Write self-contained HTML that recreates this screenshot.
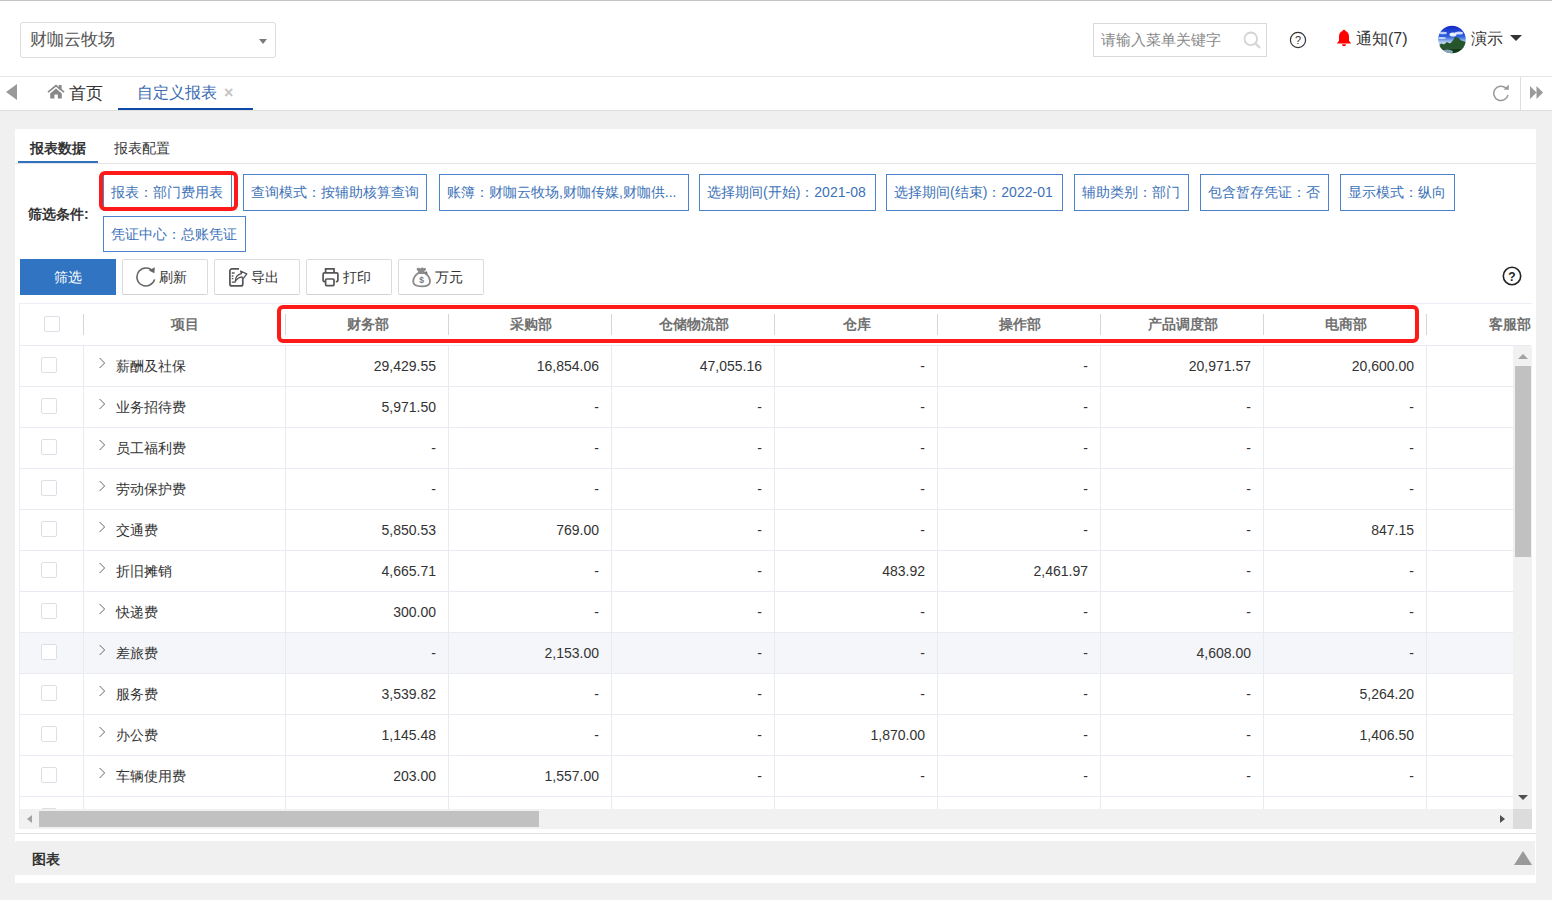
<!DOCTYPE html>
<html><head><meta charset="utf-8">
<style>
*{box-sizing:border-box;margin:0;padding:0}
html,body{width:1552px;height:900px;overflow:hidden;background:#f0f0f0;font-family:"Liberation Sans",sans-serif;color:#333;position:relative}
.abs{position:absolute}
.tag{position:absolute;height:36px;border:1px solid #4a82cc;color:#3c72b8;font-size:14px;line-height:34px;padding:0 7px;white-space:nowrap;background:#fff}
.btn{position:absolute;top:259px;height:36px;width:86px;border:1px solid #dcdcdc;border-bottom-color:#d2d2d2;background:#fff;font-size:14px;line-height:34px;color:#333;border-radius:2px}
.redbox{position:absolute;border:4px solid #ff1a1a;border-radius:6px}
#tbl{left:19px;top:303px;width:1513px;height:526px;border:1px solid #eceef5;border-bottom:0;border-right:0;background:#fff;overflow:hidden}
.row{position:absolute;left:0;width:1511px;height:41px;border-bottom:1px solid #e9ebf3}
.cell{position:absolute;top:0;height:40px;line-height:40px;font-size:14px;color:#333;white-space:nowrap}
.num{text-align:right;padding-right:12px;width:163px}
.vl{position:absolute;top:0;width:1px;height:40px;background:#e9ebf3}
.cb{position:absolute;width:16px;height:16px;border:1px solid #dcdfe6;border-radius:2px;background:#fff}
.hd{position:absolute;top:0;height:41px;line-height:41px;font-size:14px;font-weight:bold;color:#707070;text-align:center;width:163px;white-space:nowrap}
.hvl{position:absolute;top:10px;width:1px;height:21px;background:#d6d6d6}
</style></head><body>
<div class="abs" style="left:0;top:0;width:1552px;height:77px;background:#fff;border-bottom:1px solid #e6e6e6"></div>
<div class="abs" style="left:0;top:0;width:1552px;height:1px;background:#c4c4c4"></div>
<div class="abs" style="left:20px;top:22px;width:256px;height:36px;border:1px solid #dcdcdc;border-radius:3px;background:#fff"></div>
<span class="abs" style="left:30px;top:28px;font-size:16.5px;line-height:22px;color:#555">财咖云牧场</span>
<div class="abs" style="left:259px;top:39px;width:0;height:0;border-left:4.5px solid transparent;border-right:4.5px solid transparent;border-top:5.5px solid #7a7a7a"></div>
<div class="abs" style="left:1093px;top:23px;width:174px;height:34px;border:1px solid #d9d9d9;background:#fff"></div>
<span class="abs" style="left:1101px;top:29px;font-size:14.8px;line-height:22px;color:#888">请输入菜单关键字</span>
<svg class="abs" style="left:1243px;top:31px" width="19" height="19" viewBox="0 0 19 19"><circle cx="7.8" cy="7.8" r="6.3" fill="none" stroke="#d4d4d4" stroke-width="1.8"/><line x1="12.3" y1="12.3" x2="17" y2="17" stroke="#d4d4d4" stroke-width="2"/></svg>
<svg class="abs" style="left:1289px;top:31px" width="18" height="18" viewBox="0 0 18 18"><circle cx="9" cy="9" r="7.6" fill="none" stroke="#333" stroke-width="1.2"/><text x="9" y="13.2" font-size="11" text-anchor="middle" fill="#333" font-family="Liberation Sans">?</text></svg>
<svg class="abs" style="left:1336px;top:29px" width="16" height="18" viewBox="0 0 16 18"><path d="M8 .8c.9 0 1.4.6 1.4 1.3C12 2.9 13 5 13 8v3.8l2.2 2.6H.8L3 11.8V8c0-3 1-5.1 3.6-5.9C6.6 1.4 7.1.8 8 .8z" fill="#f00"/><path d="M6 15.2a2 2 0 0 0 4 0z" fill="#f00"/></svg>
<span class="abs" style="left:1356px;top:28px;font-size:16px;line-height:22px;color:#333">通知(7)</span>
<svg class="abs" style="left:1438px;top:25px" width="28" height="29" viewBox="0 0 28 29"><defs><clipPath id="av"><circle cx="14" cy="14.5" r="13.8"/></clipPath><linearGradient id="sky" x1="0" y1="0" x2="0" y2="1"><stop offset="0" stop-color="#1226c4"/><stop offset="0.4" stop-color="#2f62dc"/><stop offset="0.6" stop-color="#b8d0ee"/></linearGradient></defs><g clip-path="url(#av)"><rect width="28" height="29" fill="url(#sky)"/><ellipse cx="5" cy="8" rx="4" ry="1.3" fill="#e8f0ff" opacity=".8"/><ellipse cx="15" cy="9.5" rx="3.5" ry="2" fill="#fff" opacity=".9"/><ellipse cx="21" cy="8" rx="4" ry="1.5" fill="#f0f6ff" opacity=".85"/><ellipse cx="4" cy="13" rx="4" ry="1" fill="#fff" opacity=".7"/><path d="M0 22L3 18.5 6 19.5 9 17 12 18.5 15 15.5 17 12 20 12.5 23 15.5 28 17V24H0z" fill="#25552a"/><rect y="22" width="28" height="8" fill="#123c18"/><rect y="22.5" width="28" height="1" fill="#6a8a6a" opacity=".6"/><ellipse cx="9" cy="27" rx="6" ry="2.5" fill="#9ab8d8" opacity=".85"/></g></svg>
<span class="abs" style="left:1471px;top:28px;font-size:16px;line-height:22px;color:#333">演示</span>
<div class="abs" style="left:1510px;top:35px;width:0;height:0;border-left:6px solid transparent;border-right:6px solid transparent;border-top:6.5px solid #333"></div>
<div class="abs" style="left:0;top:77px;width:1552px;height:34px;background:#fff;border-bottom:1px solid #dedede"></div>
<div class="abs" style="left:6px;top:84px;width:0;height:0;border-top:8.5px solid transparent;border-bottom:8.5px solid transparent;border-right:11px solid #999"></div>
<svg class="abs" style="left:47px;top:84px" width="18" height="16" viewBox="0 0 18 16"><polyline points="1,8.2 9,1.6 17,8.2" fill="none" stroke="#888" stroke-width="1.7"/><rect x="11.8" y="1" width="2.8" height="4.5" fill="#888"/><path d="M3.2 9.4L9 4.6l5.8 4.8v5.2h-4V10.6H7.4v4H3.2z" fill="#888"/></svg>
<span class="abs" style="left:69px;top:82px;font-size:16.5px;line-height:22px;color:#333">首页</span>
<span class="abs" style="left:137px;top:82px;font-size:16px;line-height:22px;color:#3a6ab0">自定义报表</span>
<span class="abs" style="left:224px;top:82px;font-size:16px;font-weight:bold;line-height:22px;color:#c4c4c4">×</span>
<div class="abs" style="left:118px;top:108px;width:135px;height:2px;background:#0f4aa8"></div>
<svg class="abs" style="left:1492px;top:84px" width="18" height="18" viewBox="0 0 18 18"><path d="M16 10.8A7.2 7.2 0 1 1 14 4.2" fill="none" stroke="#999" stroke-width="1.5"/><path d="M11.6 5.8h5.2V.6z" fill="#999"/></svg>
<div class="abs" style="left:1520px;top:77px;width:1px;height:33px;background:#ddd"></div>
<svg class="abs" style="left:1530px;top:86px" width="14" height="13" viewBox="0 0 14 13"><path d="M0 0l6.5 6.5L0 13zM6.5 0l6.5 6.5-6.5 6.5z" fill="#999"/></svg>
<div class="abs" style="left:15px;top:129px;width:1521px;height:754px;background:#fff"></div>
<span class="abs" style="left:30px;top:138px;font-size:14px;font-weight:bold;line-height:20px;color:#333">报表数据</span>
<span class="abs" style="left:114px;top:138px;font-size:14px;line-height:20px;color:#333">报表配置</span>
<div class="abs" style="left:15px;top:163px;width:1521px;height:1px;background:#e4e4e4"></div>
<div class="abs" style="left:18px;top:161px;width:80px;height:2px;background:#3072c0"></div>
<span class="abs" style="left:28px;top:204px;font-size:14px;font-weight:bold;line-height:20px;color:#333">筛选条件:</span>
<div class="tag" style="left:103px;top:174px;width:129px;height:37px;line-height:35px">报表：部门费用表</div>
<div class="tag" style="left:243px;top:174px;width:184px;height:37px;line-height:35px">查询模式：按辅助核算查询</div>
<div class="tag" style="left:439px;top:174px;width:250px;height:37px;line-height:35px">账簿：财咖云牧场,财咖传媒,财咖供...</div>
<div class="tag" style="left:699px;top:174px;width:177px;height:37px;line-height:35px">选择期间(开始)：2021-08</div>
<div class="tag" style="left:886px;top:174px;width:177px;height:37px;line-height:35px">选择期间(结束)：2022-01</div>
<div class="tag" style="left:1074px;top:174px;width:115px;height:37px;line-height:35px">辅助类别：部门</div>
<div class="tag" style="left:1200px;top:174px;width:129px;height:37px;line-height:35px">包含暂存凭证：否</div>
<div class="tag" style="left:1340px;top:174px;width:115px;height:37px;line-height:35px">显示模式：纵向</div>
<div class="tag" style="left:103px;top:216px;width:143px">凭证中心：总账凭证</div>
<div class="redbox" style="left:99px;top:171px;width:139px;height:40px"></div>
<div class="abs" style="left:20px;top:259px;width:96px;height:36px;background:#3174c1;color:#fff;font-size:14px;line-height:36px;text-align:center">筛选</div>
<div class="btn" style="left:122px"><svg class="abs" style="left:13px;top:6px" width="22" height="22" viewBox="0 0 22 22"><path d="M18.6 13.4A9 9 0 1 1 17.2 5.6" fill="none" stroke="#666" stroke-width="1.6"/><path d="M12.8 4.6l5.6 2.6.4-6z" fill="#666"/></svg><span class="abs" style="left:36px;top:0">刷新</span></div>
<div class="btn" style="left:214px"><svg class="abs" style="left:14px;top:8px" width="20" height="20" viewBox="0 0 20 20"><path d="M10 .9H3C1.8 .9.9 1.8.9 3v12.9c0 1.2.9 2 2 2h8.9c1.2 0 2-.9 2-2v-4.6" fill="none" stroke="#555" stroke-width="1.7"/><path d="M2.8 5H5.6M2.8 8H4.4M2.8 10.7H4.4M2.8 14.2H6.3" stroke="#555" stroke-width="1.3"/><path d="M6.2 13.8C6.3 9 9 6.3 12.5 5.6L11.6 3.2 17.8 5.8l-4 5.4-.8-2.4C10 9.2 7.8 10.6 6.2 13.8z" fill="none" stroke="#555" stroke-width="1.3" stroke-linejoin="round"/></svg><span class="abs" style="left:36px;top:0">导出</span></div>
<div class="btn" style="left:306px"><svg class="abs" style="left:14px;top:7px" width="19" height="20" viewBox="0 0 19 20"><path d="M4.6 5.8V1.8h8.4v4" fill="none" stroke="#555" stroke-width="1.7"/><path d="M4.4 14.6H3.3C2.6 14.6 2.1 14 2.1 13.3V7.2c0-.7.6-1.3 1.3-1.3h12.2c.7 0 1.3.6 1.3 1.3v6.1c0 .7-.5 1.3-1.2 1.3h-.9" fill="none" stroke="#555" stroke-width="1.7"/><rect x="4.6" y="12" width="8.4" height="6.6" rx="1" fill="none" stroke="#555" stroke-width="1.7"/></svg><span class="abs" style="left:36px;top:0">打印</span></div>
<div class="btn" style="left:398px"><svg class="abs" style="left:13px;top:6px" width="20" height="22" viewBox="0 0 20 22"><path d="M4.5 3.2C5.5 1.5 7 1.6 8.3 2.4 9.4 1 11 1.2 11.9 2.3 13 1.8 14 2.3 14 3.4L12.2 6H6.5z" fill="#8a8a8a"/><path d="M12.2 6.3l2.6-1 .9 2.6-2.4.6z" fill="#666"/><path d="M6.4 7C3 9.2 1.2 12.4 1.2 15.6c0 3.2 3 4.8 8.6 4.8s8.2-1.6 8.2-4.8c0-3.2-1.8-6.4-5.2-8.6z" fill="none" stroke="#8a8a8a" stroke-width="1.8"/><text x="9.6" y="17" font-size="8.5" font-weight="bold" text-anchor="middle" fill="#777" font-family="Liberation Sans">$</text></svg><span class="abs" style="left:36px;top:0">万元</span></div>
<svg class="abs" style="left:1502px;top:266px" width="20" height="20" viewBox="0 0 20 20"><circle cx="10" cy="10" r="8.7" fill="none" stroke="#222" stroke-width="1.6"/><text x="10" y="14.5" font-size="12" font-weight="bold" text-anchor="middle" fill="#222" font-family="Liberation Sans">?</text></svg>
<div id="tbl" class="abs">
<div class="abs" style="left:0;top:0;width:1511px;height:42px;border-bottom:1px solid #e9ebf3"></div>
<div class="cb" style="left:24px;top:12px"></div>
<div class="hvl" style="left:63px;top:10px"></div>
<div class="hd" style="left:64px;width:201px">项目</div>
<div class="hvl" style="left:265px;top:10px"></div>
<div class="hd" style="left:266px">财务部</div>
<div class="hvl" style="left:428px;top:10px"></div>
<div class="hd" style="left:429px">采购部</div>
<div class="hvl" style="left:591px;top:10px"></div>
<div class="hd" style="left:592px">仓储物流部</div>
<div class="hvl" style="left:754px;top:10px"></div>
<div class="hd" style="left:755px">仓库</div>
<div class="hvl" style="left:917px;top:10px"></div>
<div class="hd" style="left:918px">操作部</div>
<div class="hvl" style="left:1080px;top:10px"></div>
<div class="hd" style="left:1081px">产品调度部</div>
<div class="hvl" style="left:1243px;top:10px"></div>
<div class="hd" style="left:1244px">电商部</div>
<div class="hvl" style="left:1406px;top:10px"></div>
<div class="hd" style="left:1407px;text-align:right;padding-right:1px;width:105px">客服部</div>
<div class="row" style="top:42px;">
<div class="cb" style="left:21px;top:11px"></div>
<div class="vl" style="left:63px"></div>
<svg class="abs" style="left:78px;top:11px" width="9" height="12" viewBox="0 0 9 12"><path d="M1.6 1l5 5-5 5" fill="none" stroke="#666" stroke-width="1"/></svg>
<div class="cell" style="left:96px">薪酬及社保</div>
<div class="vl" style="left:265px"></div>
<div class="cell num" style="left:265px">29,429.55</div>
<div class="vl" style="left:428px"></div>
<div class="cell num" style="left:428px">16,854.06</div>
<div class="vl" style="left:591px"></div>
<div class="cell num" style="left:591px">47,055.16</div>
<div class="vl" style="left:754px"></div>
<div class="cell num" style="left:754px">-</div>
<div class="vl" style="left:917px"></div>
<div class="cell num" style="left:917px">-</div>
<div class="vl" style="left:1080px"></div>
<div class="cell num" style="left:1080px">20,971.57</div>
<div class="vl" style="left:1243px"></div>
<div class="cell num" style="left:1243px">20,600.00</div>
<div class="vl" style="left:1406px"></div>
</div>
<div class="row" style="top:83px;">
<div class="cb" style="left:21px;top:11px"></div>
<div class="vl" style="left:63px"></div>
<svg class="abs" style="left:78px;top:11px" width="9" height="12" viewBox="0 0 9 12"><path d="M1.6 1l5 5-5 5" fill="none" stroke="#666" stroke-width="1"/></svg>
<div class="cell" style="left:96px">业务招待费</div>
<div class="vl" style="left:265px"></div>
<div class="cell num" style="left:265px">5,971.50</div>
<div class="vl" style="left:428px"></div>
<div class="cell num" style="left:428px">-</div>
<div class="vl" style="left:591px"></div>
<div class="cell num" style="left:591px">-</div>
<div class="vl" style="left:754px"></div>
<div class="cell num" style="left:754px">-</div>
<div class="vl" style="left:917px"></div>
<div class="cell num" style="left:917px">-</div>
<div class="vl" style="left:1080px"></div>
<div class="cell num" style="left:1080px">-</div>
<div class="vl" style="left:1243px"></div>
<div class="cell num" style="left:1243px">-</div>
<div class="vl" style="left:1406px"></div>
</div>
<div class="row" style="top:124px;">
<div class="cb" style="left:21px;top:11px"></div>
<div class="vl" style="left:63px"></div>
<svg class="abs" style="left:78px;top:11px" width="9" height="12" viewBox="0 0 9 12"><path d="M1.6 1l5 5-5 5" fill="none" stroke="#666" stroke-width="1"/></svg>
<div class="cell" style="left:96px">员工福利费</div>
<div class="vl" style="left:265px"></div>
<div class="cell num" style="left:265px">-</div>
<div class="vl" style="left:428px"></div>
<div class="cell num" style="left:428px">-</div>
<div class="vl" style="left:591px"></div>
<div class="cell num" style="left:591px">-</div>
<div class="vl" style="left:754px"></div>
<div class="cell num" style="left:754px">-</div>
<div class="vl" style="left:917px"></div>
<div class="cell num" style="left:917px">-</div>
<div class="vl" style="left:1080px"></div>
<div class="cell num" style="left:1080px">-</div>
<div class="vl" style="left:1243px"></div>
<div class="cell num" style="left:1243px">-</div>
<div class="vl" style="left:1406px"></div>
</div>
<div class="row" style="top:165px;">
<div class="cb" style="left:21px;top:11px"></div>
<div class="vl" style="left:63px"></div>
<svg class="abs" style="left:78px;top:11px" width="9" height="12" viewBox="0 0 9 12"><path d="M1.6 1l5 5-5 5" fill="none" stroke="#666" stroke-width="1"/></svg>
<div class="cell" style="left:96px">劳动保护费</div>
<div class="vl" style="left:265px"></div>
<div class="cell num" style="left:265px">-</div>
<div class="vl" style="left:428px"></div>
<div class="cell num" style="left:428px">-</div>
<div class="vl" style="left:591px"></div>
<div class="cell num" style="left:591px">-</div>
<div class="vl" style="left:754px"></div>
<div class="cell num" style="left:754px">-</div>
<div class="vl" style="left:917px"></div>
<div class="cell num" style="left:917px">-</div>
<div class="vl" style="left:1080px"></div>
<div class="cell num" style="left:1080px">-</div>
<div class="vl" style="left:1243px"></div>
<div class="cell num" style="left:1243px">-</div>
<div class="vl" style="left:1406px"></div>
</div>
<div class="row" style="top:206px;">
<div class="cb" style="left:21px;top:11px"></div>
<div class="vl" style="left:63px"></div>
<svg class="abs" style="left:78px;top:11px" width="9" height="12" viewBox="0 0 9 12"><path d="M1.6 1l5 5-5 5" fill="none" stroke="#666" stroke-width="1"/></svg>
<div class="cell" style="left:96px">交通费</div>
<div class="vl" style="left:265px"></div>
<div class="cell num" style="left:265px">5,850.53</div>
<div class="vl" style="left:428px"></div>
<div class="cell num" style="left:428px">769.00</div>
<div class="vl" style="left:591px"></div>
<div class="cell num" style="left:591px">-</div>
<div class="vl" style="left:754px"></div>
<div class="cell num" style="left:754px">-</div>
<div class="vl" style="left:917px"></div>
<div class="cell num" style="left:917px">-</div>
<div class="vl" style="left:1080px"></div>
<div class="cell num" style="left:1080px">-</div>
<div class="vl" style="left:1243px"></div>
<div class="cell num" style="left:1243px">847.15</div>
<div class="vl" style="left:1406px"></div>
</div>
<div class="row" style="top:247px;">
<div class="cb" style="left:21px;top:11px"></div>
<div class="vl" style="left:63px"></div>
<svg class="abs" style="left:78px;top:11px" width="9" height="12" viewBox="0 0 9 12"><path d="M1.6 1l5 5-5 5" fill="none" stroke="#666" stroke-width="1"/></svg>
<div class="cell" style="left:96px">折旧摊销</div>
<div class="vl" style="left:265px"></div>
<div class="cell num" style="left:265px">4,665.71</div>
<div class="vl" style="left:428px"></div>
<div class="cell num" style="left:428px">-</div>
<div class="vl" style="left:591px"></div>
<div class="cell num" style="left:591px">-</div>
<div class="vl" style="left:754px"></div>
<div class="cell num" style="left:754px">483.92</div>
<div class="vl" style="left:917px"></div>
<div class="cell num" style="left:917px">2,461.97</div>
<div class="vl" style="left:1080px"></div>
<div class="cell num" style="left:1080px">-</div>
<div class="vl" style="left:1243px"></div>
<div class="cell num" style="left:1243px">-</div>
<div class="vl" style="left:1406px"></div>
</div>
<div class="row" style="top:288px;">
<div class="cb" style="left:21px;top:11px"></div>
<div class="vl" style="left:63px"></div>
<svg class="abs" style="left:78px;top:11px" width="9" height="12" viewBox="0 0 9 12"><path d="M1.6 1l5 5-5 5" fill="none" stroke="#666" stroke-width="1"/></svg>
<div class="cell" style="left:96px">快递费</div>
<div class="vl" style="left:265px"></div>
<div class="cell num" style="left:265px">300.00</div>
<div class="vl" style="left:428px"></div>
<div class="cell num" style="left:428px">-</div>
<div class="vl" style="left:591px"></div>
<div class="cell num" style="left:591px">-</div>
<div class="vl" style="left:754px"></div>
<div class="cell num" style="left:754px">-</div>
<div class="vl" style="left:917px"></div>
<div class="cell num" style="left:917px">-</div>
<div class="vl" style="left:1080px"></div>
<div class="cell num" style="left:1080px">-</div>
<div class="vl" style="left:1243px"></div>
<div class="cell num" style="left:1243px">-</div>
<div class="vl" style="left:1406px"></div>
</div>
<div class="row" style="top:329px;background:#f5f6fa;">
<div class="cb" style="left:21px;top:11px"></div>
<div class="vl" style="left:63px"></div>
<svg class="abs" style="left:78px;top:11px" width="9" height="12" viewBox="0 0 9 12"><path d="M1.6 1l5 5-5 5" fill="none" stroke="#666" stroke-width="1"/></svg>
<div class="cell" style="left:96px">差旅费</div>
<div class="vl" style="left:265px"></div>
<div class="cell num" style="left:265px">-</div>
<div class="vl" style="left:428px"></div>
<div class="cell num" style="left:428px">2,153.00</div>
<div class="vl" style="left:591px"></div>
<div class="cell num" style="left:591px">-</div>
<div class="vl" style="left:754px"></div>
<div class="cell num" style="left:754px">-</div>
<div class="vl" style="left:917px"></div>
<div class="cell num" style="left:917px">-</div>
<div class="vl" style="left:1080px"></div>
<div class="cell num" style="left:1080px">4,608.00</div>
<div class="vl" style="left:1243px"></div>
<div class="cell num" style="left:1243px">-</div>
<div class="vl" style="left:1406px"></div>
</div>
<div class="row" style="top:370px;">
<div class="cb" style="left:21px;top:11px"></div>
<div class="vl" style="left:63px"></div>
<svg class="abs" style="left:78px;top:11px" width="9" height="12" viewBox="0 0 9 12"><path d="M1.6 1l5 5-5 5" fill="none" stroke="#666" stroke-width="1"/></svg>
<div class="cell" style="left:96px">服务费</div>
<div class="vl" style="left:265px"></div>
<div class="cell num" style="left:265px">3,539.82</div>
<div class="vl" style="left:428px"></div>
<div class="cell num" style="left:428px">-</div>
<div class="vl" style="left:591px"></div>
<div class="cell num" style="left:591px">-</div>
<div class="vl" style="left:754px"></div>
<div class="cell num" style="left:754px">-</div>
<div class="vl" style="left:917px"></div>
<div class="cell num" style="left:917px">-</div>
<div class="vl" style="left:1080px"></div>
<div class="cell num" style="left:1080px">-</div>
<div class="vl" style="left:1243px"></div>
<div class="cell num" style="left:1243px">5,264.20</div>
<div class="vl" style="left:1406px"></div>
</div>
<div class="row" style="top:411px;">
<div class="cb" style="left:21px;top:11px"></div>
<div class="vl" style="left:63px"></div>
<svg class="abs" style="left:78px;top:11px" width="9" height="12" viewBox="0 0 9 12"><path d="M1.6 1l5 5-5 5" fill="none" stroke="#666" stroke-width="1"/></svg>
<div class="cell" style="left:96px">办公费</div>
<div class="vl" style="left:265px"></div>
<div class="cell num" style="left:265px">1,145.48</div>
<div class="vl" style="left:428px"></div>
<div class="cell num" style="left:428px">-</div>
<div class="vl" style="left:591px"></div>
<div class="cell num" style="left:591px">-</div>
<div class="vl" style="left:754px"></div>
<div class="cell num" style="left:754px">1,870.00</div>
<div class="vl" style="left:917px"></div>
<div class="cell num" style="left:917px">-</div>
<div class="vl" style="left:1080px"></div>
<div class="cell num" style="left:1080px">-</div>
<div class="vl" style="left:1243px"></div>
<div class="cell num" style="left:1243px">1,406.50</div>
<div class="vl" style="left:1406px"></div>
</div>
<div class="row" style="top:452px;">
<div class="cb" style="left:21px;top:11px"></div>
<div class="vl" style="left:63px"></div>
<svg class="abs" style="left:78px;top:11px" width="9" height="12" viewBox="0 0 9 12"><path d="M1.6 1l5 5-5 5" fill="none" stroke="#666" stroke-width="1"/></svg>
<div class="cell" style="left:96px">车辆使用费</div>
<div class="vl" style="left:265px"></div>
<div class="cell num" style="left:265px">203.00</div>
<div class="vl" style="left:428px"></div>
<div class="cell num" style="left:428px">1,557.00</div>
<div class="vl" style="left:591px"></div>
<div class="cell num" style="left:591px">-</div>
<div class="vl" style="left:754px"></div>
<div class="cell num" style="left:754px">-</div>
<div class="vl" style="left:917px"></div>
<div class="cell num" style="left:917px">-</div>
<div class="vl" style="left:1080px"></div>
<div class="cell num" style="left:1080px">-</div>
<div class="vl" style="left:1243px"></div>
<div class="cell num" style="left:1243px">-</div>
<div class="vl" style="left:1406px"></div>
</div>
<div class="row" style="top:493px;">
<div class="cb" style="left:21px;top:11px"></div>
<div class="vl" style="left:63px"></div>
<div class="vl" style="left:265px"></div>
<div class="vl" style="left:428px"></div>
<div class="vl" style="left:591px"></div>
<div class="vl" style="left:754px"></div>
<div class="vl" style="left:917px"></div>
<div class="vl" style="left:1080px"></div>
<div class="vl" style="left:1243px"></div>
<div class="vl" style="left:1406px"></div>
</div>
<div class="abs" style="left:1493px;top:42px;width:19px;height:463px;background:#f1f1f1"></div>
<div class="abs" style="left:1498px;top:50px;width:0;height:0;border-left:5px solid transparent;border-right:5px solid transparent;border-bottom:5px solid #a3a3a3"></div>
<div class="abs" style="left:1495px;top:62px;width:16px;height:191px;background:#c1c1c1"></div>
<div class="abs" style="left:1498px;top:491px;width:0;height:0;border-left:5px solid transparent;border-right:5px solid transparent;border-top:5px solid #505050"></div>
<div class="abs" style="left:0;top:505px;width:1511px;height:21px;background:#f1f1f1"></div>
<div class="abs" style="left:7px;top:511px;width:0;height:0;border-top:4.5px solid transparent;border-bottom:4.5px solid transparent;border-right:5px solid #a3a3a3"></div>
<div class="abs" style="left:19px;top:507px;width:500px;height:16px;background:#c1c1c1"></div>
<div class="abs" style="left:1480px;top:511px;width:0;height:0;border-top:4.5px solid transparent;border-bottom:4.5px solid transparent;border-left:5px solid #505050"></div>
<div class="abs" style="left:1493px;top:505px;width:19px;height:21px;background:#dcdcdc"></div>
</div>
<div class="redbox" style="left:277px;top:305px;height:38px;width:1142px"></div>
<div class="abs" style="left:15px;top:833px;width:1521px;height:1px;background:#e2e2e2"></div>
<div class="abs" style="left:15px;top:841px;width:1520px;height:34px;background:#f0f0f0;border-radius:3px 0 0 0"></div>
<span class="abs" style="left:32px;top:849px;font-size:14px;font-weight:bold;line-height:20px;color:#333">图表</span>
<div class="abs" style="left:1514px;top:851px;width:0;height:0;border-left:9px solid transparent;border-right:9px solid transparent;border-bottom:14px solid #9a9a9a"></div>
</body></html>
